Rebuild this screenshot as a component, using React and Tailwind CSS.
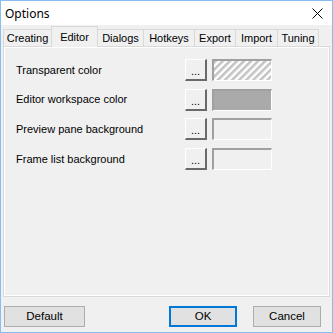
import React from 'react';

const tabs = [
  { name: 'Creating', w: 49 },
  { name: 'Editor', w: 47 },
  { name: 'Dialogs', w: 47 },
  { name: 'Hotkeys', w: 52 },
  { name: 'Export', w: 42 },
  { name: 'Import', w: 43 },
  { name: 'Tuning', w: 42 },
];

const rows = [
  { label: 'Transparent color', kind: 'hatch' },
  { label: 'Editor workspace color', kind: 'gray' },
  { label: 'Preview pane background', kind: 'empty' },
  { label: 'Frame list background', kind: 'empty' },
];

// sunken colour box next to the "..." button
const Swatch = ({ kind }) => {
  const fill =
    kind === 'gray' ? 'bg-[#aaaaaa]' : kind === 'hatch' ? 'bg-white' : 'bg-[#f0f0f0]';
  return (
    <div className="w-[60px] h-[22px] border-t-2 border-l-2 border-t-[#a0a0a0] border-l-[#a0a0a0] border-b border-r border-b-white border-r-white">
      <div className={`w-full h-full ${fill}`}>
        {kind === 'hatch' && (
          <svg width="57" height="19" className="block">
            <defs>
              <pattern id="hatch" width="5" height="5" patternUnits="userSpaceOnUse" patternTransform="rotate(45)">
                <rect width="2.5" height="5" fill="#c2c2c2" />
              </pattern>
            </defs>
            <rect width="57" height="19" fill="url(#hatch)" />
          </svg>
        )}
      </div>
    </div>
  );
};

const DotsButton = () => (
  <button className="w-[22px] h-[22px] bg-[#f0f0f0] border-t border-l border-t-white border-l-white border-b-2 border-r-2 border-b-[#696969] border-r-[#696969] flex items-end justify-center pb-[2px] text-[11px] leading-none text-black">
    ...
  </button>
);

const App = () => {
  return (
    <div
      className="w-[333px] h-[333px] border border-[#88bdf0] bg-[#f0f0f0] flex flex-col text-black"
      style={{ fontFamily: '"Liberation Sans", Arial, sans-serif' }}
    >
      {/* Title bar */}
      <div className="h-[24px] bg-white flex items-center justify-between pl-[4px] pr-[9px]">
        <span className="text-[12px] pt-[1px]" style={{ fontFamily: '"Noto Sans", sans-serif' }}>
          Options
        </span>
        <svg width="11" height="11" viewBox="0 0 11 11" className="mt-[1px]">
          <path d="M0.5 0.5 L10.5 10.5 M10.5 0.5 L0.5 10.5" stroke="#000" strokeWidth="1" />
        </svg>
      </div>

      {/* Tabs */}
      <div className="h-[21px] flex items-end pl-[2px]">
        {tabs.map((t) =>
          t.name === 'Editor' ? (
            <div
              key={t.name}
              style={{ width: t.w }}
              className="h-[21px] -mb-px -ml-px relative z-10 bg-[#f0f0f0] border border-b-0 border-[#d9d9d9] flex items-start justify-center pt-[2px] text-[11px]"
            >
              {t.name}
            </div>
          ) : (
            <div
              key={t.name}
              style={{ width: t.w }}
              className="h-[17px] -ml-px first:ml-0 bg-[#f0f0f0] border border-b-0 border-[#d9d9d9] flex items-center justify-center text-[11px]"
            >
              {t.name}
            </div>
          )
        )}
      </div>

      {/* Panel */}
      <div className="mx-[2px] h-[251px] border border-[#d9d9d9] shadow-[inset_1px_1px_0_#ffffff,inset_-1px_-1px_0_#ffffff] pt-[12px] flex flex-col gap-[7.7px]">
        {rows.map((r) => (
          <div key={r.label} className="h-[22px] flex items-center">
            <span className="w-[181px] pl-[12px] text-[11px]">{r.label}</span>
            <DotsButton />
            <div className="ml-[5px]">
              <Swatch kind={r.kind} />
            </div>
          </div>
        ))}
      </div>

      {/* Buttons */}
      <div className="flex items-center mt-[9px] px-[3px] text-[11.5px]">
        <button className="w-[81px] h-[21px] bg-[#e1e1e1] border border-[#adadad]">Default</button>
        <button className="ml-[84px] w-[68px] h-[21px] bg-[#e1e1e1] border-2 border-[#0078d7]">OK</button>
        <button className="ml-[16px] w-[68px] h-[21px] bg-[#e1e1e1] border border-[#adadad]">Cancel</button>
      </div>
    </div>
  );
};

export default App;
